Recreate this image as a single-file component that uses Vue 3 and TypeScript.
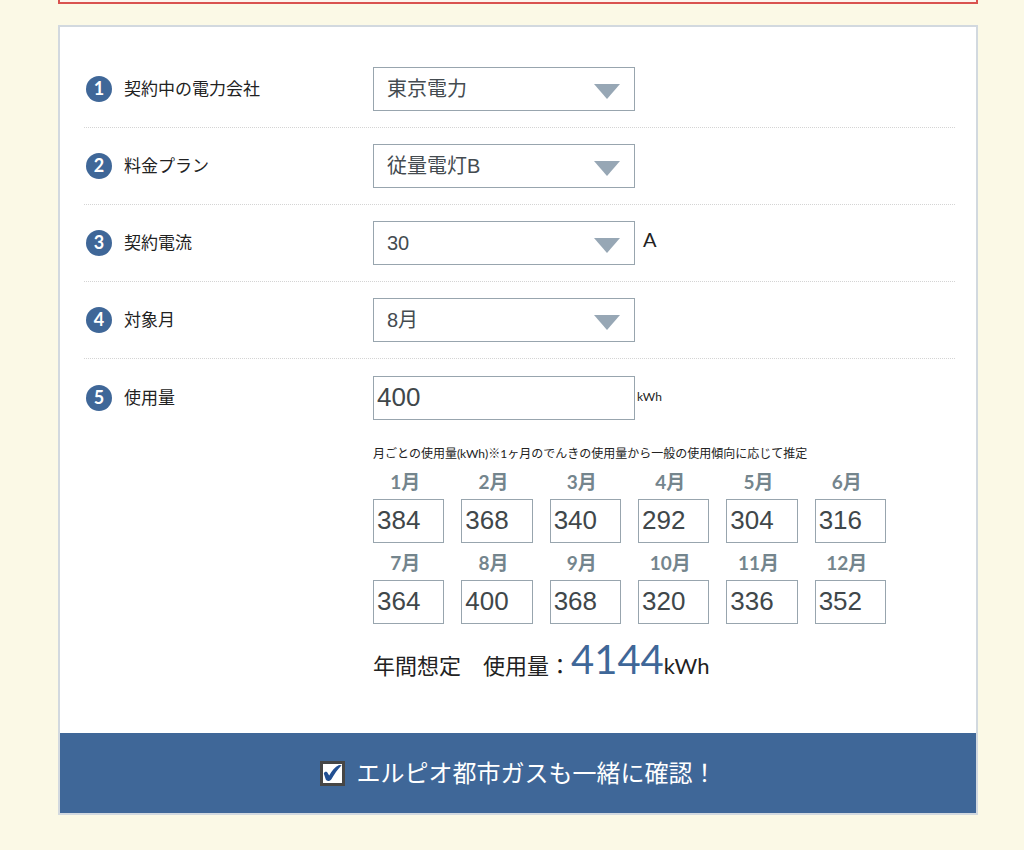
<script setup lang="ts">
import { computed, reactive, ref } from 'vue'

interface SelectField {
  id: string
  label: string
  options: string[]
  unit?: string
}

const fields: SelectField[] = [
  { id: 'company', label: '契約中の電力会社', options: ['東京電力'] },
  { id: 'plan', label: '料金プラン', options: ['従量電灯B'] },
  { id: 'ampere', label: '契約電流', options: ['30'], unit: 'A' },
  { id: 'month', label: '対象月', options: ['8月'] },
]

const selected = reactive<Record<string, string>>({
  company: '東京電力',
  plan: '従量電灯B',
  ampere: '30',
  month: '8月',
})

const usage = ref('400')
const monthly = ref<number[]>([384, 368, 340, 292, 304, 316, 364, 400, 368, 320, 336, 352])
const total = computed(() => monthly.value.reduce((sum, value) => sum + Number(value), 0))
const withGas = ref(true)
</script>

<template>
  <main class="page">
    <div class="notice"></div>
    <form class="card" @submit.prevent>
      <div class="rows">
        <div v-for="(field, index) in fields" :key="field.id" class="row">
          <label class="label" :for="field.id">
            <span class="badge">{{ index + 1 }}</span>{{ field.label }}
          </label>
          <div class="control">
            <div class="select">
              <select :id="field.id" v-model="selected[field.id]">
                <option v-for="option in field.options" :key="option">{{ option }}</option>
              </select>
              <svg class="arrow" viewBox="0 0 26 15" aria-hidden="true">
                <path d="M0 0H26L13 15Z" fill="#97a7b5" />
              </svg>
            </div>
            <span v-if="field.unit" class="unit">{{ field.unit }}</span>
          </div>
        </div>

        <div class="row">
          <label class="label" for="usage"><span class="badge">5</span>使用量</label>
          <div class="usage">
            <div class="control">
              <input id="usage" v-model="usage" class="box main-box" type="text" />
              <span class="small-unit">kWh</span>
            </div>
            <p class="note">月ごとの使用量(kWh)※1ヶ月のでんきの使用量から一般の使用傾向に応じて推定</p>
            <div class="months">
              <div v-for="(_, i) in monthly" :key="i" class="month">
                <label :for="`month-${i + 1}`">{{ i + 1 }}月</label>
                <input :id="`month-${i + 1}`" v-model="monthly[i]" class="box" type="text" />
              </div>
            </div>
            <p class="total">年間想定　使用量：<span class="total-value">{{ total }}</span>kWh</p>
          </div>
        </div>
      </div>

      <div class="footer">
        <label class="gas">
          <span class="check">
            <input v-model="withGas" type="checkbox" />
            <svg v-if="withGas" viewBox="0 0 19 19" aria-hidden="true">
              <path d="M0.8 9.6C1.4 7.4 3.8 7.2 4.8 9.2L6.2 11.6C8.6 6.8 12 3 16 1L18.6 1.2C14.6 5.2 11.4 10 8.4 15.2C7 17.4 3.8 17.6 2.8 15.6Z" fill="#224f92" />
            </svg>
          </span>
          エルピオ都市ガスも一緒に確認！
        </label>
      </div>
    </form>
  </main>
</template>

<style>
body {
  margin: 0;
  background: #fbf9e6;
}
</style>

<style scoped>
* {
  box-sizing: border-box;
}

.page {
  padding: 0 46px 35px 58px;
  color: #222;
  font-family: Lato, "Noto Sans CJK JP", sans-serif;
}

.notice {
  height: 4px;
  border: 2px solid #d9534f;
  border-top: 0;
  background: #fdf5ee;
}

.card {
  margin-top: 21px;
  border: 2px solid #d2d9df;
  background: #fff;
}

.rows {
  padding: 24px 21px 44px 24px;
}

.row {
  display: flex;
  align-items: flex-start;
  padding: 16px 0;
  border-bottom: 1px dotted #d4d4d4;
}

.row:last-child {
  padding-top: 17px;
  padding-bottom: 0;
  border-bottom: 0;
}

.label {
  display: flex;
  flex: 0 0 289px;
  align-items: center;
  gap: 12px;
  height: 44px;
  padding-left: 2px;
  font-size: 17px;
  line-height: 24px;
}

.badge {
  width: 26px;
  height: 26px;
  border-radius: 50%;
  background: #3f6798;
  color: #fff;
  font-size: 18px;
  font-weight: 700;
  line-height: 25px;
  text-align: center;
}

.control {
  display: flex;
  align-items: center;
}

.select {
  position: relative;
  width: 262px;
}

.select select {
  display: block;
  width: 100%;
  height: 44px;
  padding: 0 48px 0 13px;
  border: 1px solid #98a5ae;
  border-radius: 0;
  appearance: none;
  background: #fff;
  color: #444b50;
  font-family: "Liberation Sans", "Noto Sans CJK JP", sans-serif;
  font-size: 20px;
}

.arrow {
  position: absolute;
  top: 17px;
  right: 15px;
  width: 26px;
  height: 15px;
  pointer-events: none;
}

.unit {
  padding: 0 0 8px 8px;
  font-size: 20px;
  line-height: 24px;
}

.small-unit {
  padding: 0 0 2px 2px;
  font-size: 12px;
  line-height: 16px;
}

.box {
  display: block;
  width: 100%;
  height: 44px;
  padding: 0 3px 2px;
  border: 1px solid #98a5ae;
  border-radius: 0;
  background: #fff;
  color: #40474a;
  font-family: "Liberation Sans", sans-serif;
  font-size: 26px;
}

.main-box {
  width: 262px;
}

.note {
  margin: 24px 0 0;
  font-size: 12px;
  line-height: 20px;
}

.months {
  display: grid;
  grid-template-columns: repeat(6, 1fr);
  gap: 6px 17px;
  width: 513px;
  padding-top: 4px;
}

.month label {
  display: block;
  height: 31px;
  padding-right: 7px;
  color: #74858d;
  font-size: 19px;
  font-weight: 700;
  line-height: 28px;
  text-align: center;
}

.total {
  margin: 12px 0 0;
  font-size: 22px;
  line-height: 46px;
}

.total-value {
  color: #3f6798;
  font-size: 40px;
}

.footer {
  display: flex;
  justify-content: center;
  padding: 20px;
  background: #3f6798;
  color: #fff;
}

.gas {
  display: flex;
  align-items: center;
  gap: 12px;
  font-size: 24px;
  line-height: 40px;
}

.check {
  position: relative;
  width: 25px;
  height: 25px;
}

.check input {
  display: block;
  width: 25px;
  height: 25px;
  margin: 0;
  border: 3px solid #464646;
  border-radius: 0;
  appearance: none;
  background: #fff;
}

.check svg {
  position: absolute;
  inset: 3px;
  width: 19px;
  height: 19px;
  pointer-events: none;
}
</style>
